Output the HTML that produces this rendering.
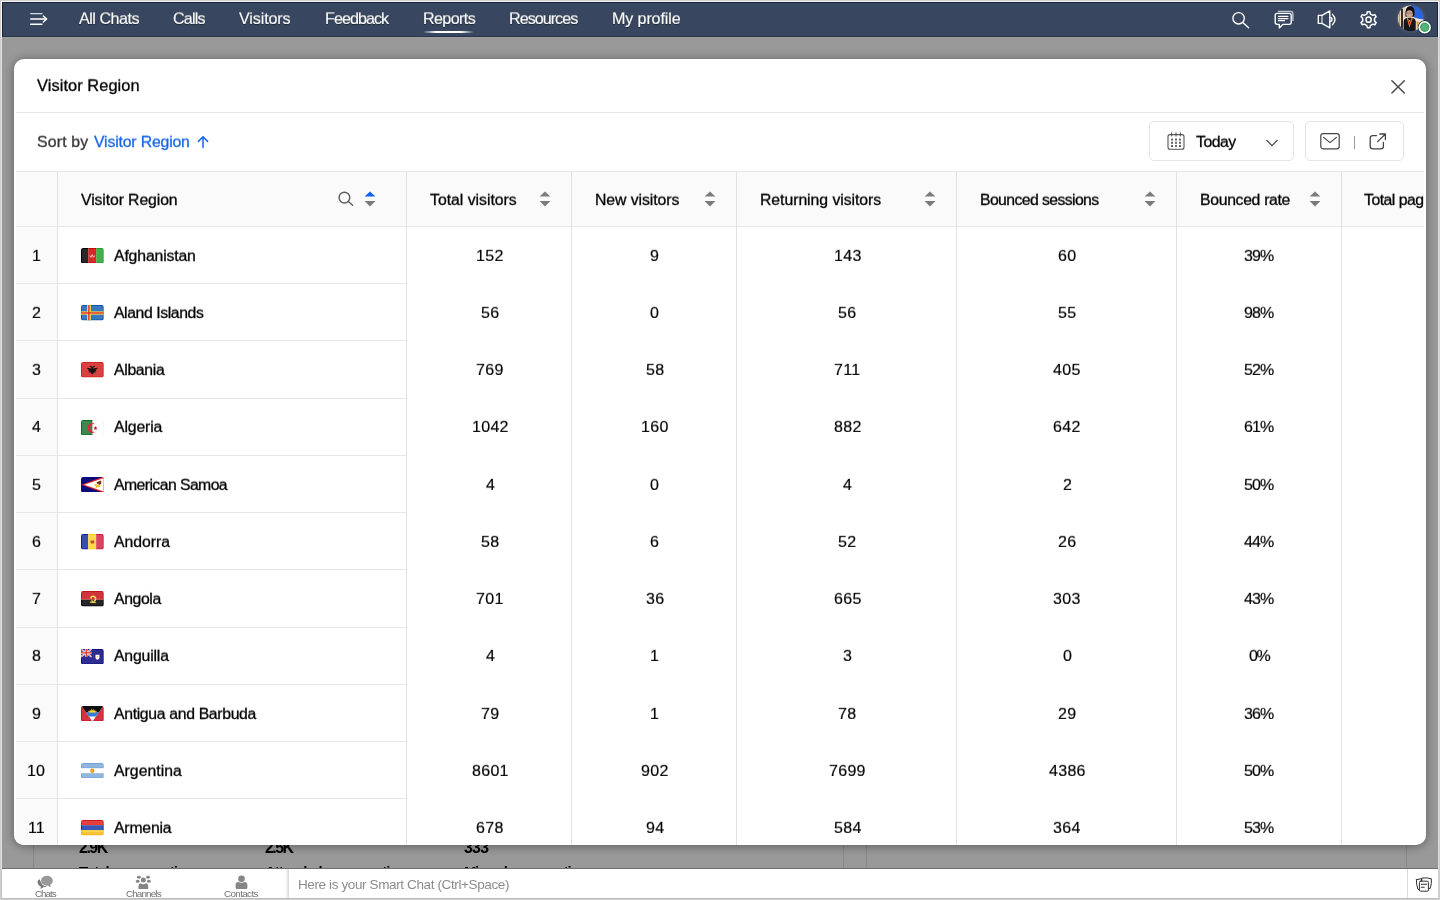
<!DOCTYPE html>
<html lang="en">
<head>
<meta charset="utf-8">
<title>Visitor Region</title>
<style>
*{box-sizing:border-box;margin:0;padding:0}
html,body{width:1440px;height:900px;overflow:hidden}
body{font-family:"Liberation Sans",sans-serif;background:#fff;position:relative;color:#111}
span{position:absolute;white-space:nowrap;will-change:transform}
div,svg{position:absolute}
#frame{left:0;top:0;width:1440px;height:900px;border:1px solid #cfcfcf;z-index:50}
#frame i{position:absolute;display:block}
#nav{left:2px;top:2px;width:1436px;height:35px;background:#38475f;border-top:1px solid #14233d;border-left:1px solid #14233d;border-right:1px solid #14233d;border-bottom:1px solid #26344c;z-index:5;box-shadow:0 1px 0 rgba(255,245,235,.08)}
#nav span{color:#fff;text-shadow:0 1px 1px rgba(0,0,0,.55)}
#page{left:2px;top:37px;width:1436px;height:832px;background:#fff;overflow:hidden}
#overlay{left:2px;top:37px;width:1436px;height:832px;background:rgba(0,0,0,.4);z-index:3}
#bbar{left:2px;top:868px;width:1436px;height:30px;background:#fff;z-index:6;overflow:hidden}
#mshadow{left:14px;top:59px;width:1412px;height:786px;border-radius:10px;box-shadow:0 1px 11px rgba(0,0,0,.42);z-index:9}
#modal{left:14px;top:59px;width:1412px;height:786px;background:#fff;border-radius:10px;overflow:hidden;z-index:10}
.hl{height:1px;background:#e7e7e7}
.vl{width:1px;background:#e2e2e2}
.btn{border:1px solid #e4e4e4;border-radius:5px;background:#fff}
</style>
</head>
<body>
<div id="page"><div style="left:31px;top:60px;width:811px;height:772px;border-left:1px solid #e2e2e2;border-right:1px solid #e2e2e2"></div><div style="left:864px;top:60px;width:541px;height:772px;border-left:1px solid #e2e2e2;border-right:1px solid #e2e2e2"></div><span style="left:76.80px;top:801.30px;font-size:15.8px;line-height:20px;letter-spacing:-1.400px;color:#000;font-weight:bold;">2.9K</span><span style="left:263.00px;top:801.30px;font-size:15.8px;line-height:20px;letter-spacing:-1.467px;color:#000;font-weight:bold;">2.5K</span><span style="left:462.00px;top:801.30px;font-size:15.8px;line-height:20px;letter-spacing:-0.675px;color:#000;font-weight:bold;">333</span><span style="left:76.50px;top:825.10px;font-size:15px;line-height:20px;letter-spacing:-1.006px;color:#000;font-weight:bold;">Total conversations</span><span style="left:263.00px;top:825.10px;font-size:15px;line-height:20px;letter-spacing:-1.040px;color:#000;font-weight:bold;">Attended conversations</span><span style="left:462.00px;top:825.10px;font-size:15px;line-height:20px;letter-spacing:-1.405px;color:#000;font-weight:bold;">Missed conversations</span></div><div id="overlay"></div><div id="nav"></div><div style="left:0;top:0;width:1440px;height:40px;z-index:6" id="navitems"><span style="left:79.00px;top:8.30px;font-size:16.1px;line-height:20px;letter-spacing:-0.475px;color:#fff;transform:scaleY(0.97);transform-origin:0 16.00px;-webkit-text-stroke:0.15px #fff;text-shadow:0 1px 1px rgba(0,0,0,.5);">All Chats</span><span style="left:173.00px;top:8.30px;font-size:16.1px;line-height:20px;letter-spacing:-0.800px;color:#fff;transform:scaleY(0.97);transform-origin:0 16.00px;-webkit-text-stroke:0.15px #fff;text-shadow:0 1px 1px rgba(0,0,0,.5);">Calls</span><span style="left:239.00px;top:8.30px;font-size:16.1px;line-height:20px;letter-spacing:-0.129px;color:#fff;transform:scaleY(0.97);transform-origin:0 16.00px;-webkit-text-stroke:0.15px #fff;text-shadow:0 1px 1px rgba(0,0,0,.5);">Visitors</span><span style="left:324.50px;top:8.30px;font-size:16.1px;line-height:20px;letter-spacing:-0.950px;color:#fff;transform:scaleY(0.97);transform-origin:0 16.00px;-webkit-text-stroke:0.15px #fff;text-shadow:0 1px 1px rgba(0,0,0,.5);">Feedback</span><span style="left:422.50px;top:8.30px;font-size:16.1px;line-height:20px;letter-spacing:-0.608px;color:#fff;transform:scaleY(0.97);transform-origin:0 16.00px;-webkit-text-stroke:0.15px #fff;text-shadow:0 1px 1px rgba(0,0,0,.5);">Reports</span><span style="left:509.00px;top:8.30px;font-size:16.1px;line-height:20px;letter-spacing:-0.969px;color:#fff;transform:scaleY(0.97);transform-origin:0 16.00px;-webkit-text-stroke:0.15px #fff;text-shadow:0 1px 1px rgba(0,0,0,.5);">Resources</span><span style="left:611.50px;top:8.30px;font-size:16.1px;line-height:20px;letter-spacing:-0.122px;color:#fff;transform:scaleY(0.97);transform-origin:0 16.00px;-webkit-text-stroke:0.15px #fff;text-shadow:0 1px 1px rgba(0,0,0,.5);">My profile</span><div style="left:423px;top:31px;width:51px;height:2px;border-radius:2px;background:linear-gradient(90deg,rgba(255,255,255,0),#fff 25%,#fff 75%,rgba(255,255,255,0))"></div><svg width="24" height="16" viewBox="0 0 24 16" style="left:27.8px;top:10.5px" fill="none" stroke="#fff" stroke-width="1.4" stroke-linecap="round" stroke-linejoin="round"><path d="M2.7 2.6 H14" opacity=".8"/><path d="M2.7 8 H18.4"/><path d="M2.7 13.3 H14"/><path d="M15.3 4.9 L18.6 8 L15.3 11.1"/></svg><svg width="220" height="40" viewBox="1220 0 220 40" style="left:1220px;top:0" fill="none" stroke="#fff" stroke-width="1.35" stroke-linecap="round" stroke-linejoin="round"><circle cx="1238.6" cy="18.3" r="5.7"/><path d="M1242.8 22.4 L1248.6 27.7"/><path d="M1278.4 11.3 H1290.6 Q1292.9 11.3 1292.9 13.6 V20.6" opacity=".7"/><path d="M1277.2 13.3 H1289.2 Q1291.2 13.3 1291.2 15.3 V22.3 Q1291.2 24.3 1289.2 24.3 H1283 L1279.3 27.9 V24.3 H1277.2 Q1275.2 24.3 1275.2 22.3 V15.3 Q1275.2 13.3 1277.2 13.3 Z"/><path d="M1278.4 16.3 H1288 M1278.4 18.6 H1288 M1278.4 20.7 H1284.6" stroke-width="1.2"/><path d="M1318.3 15.4 H1322 L1329.8 10.9 V27.9 L1322 23.4 H1318.3 Z"/><path d="M1322 15.4 V23.4" opacity=".75"/><path d="M1329.9 17.3 A2.1 2.1 0 0 1 1329.9 21.5"/><path d="M1332.4 14.2 Q1337.4 19.5 1332.4 24.8"/><path d="M1370.30 25.56 L1369.87 27.70 L1367.33 27.70 L1366.90 25.56 L1364.38 24.10 L1362.31 24.80 L1361.04 22.60 L1362.68 21.16 L1362.68 18.24 L1361.04 16.80 L1362.31 14.60 L1364.38 15.30 L1366.90 13.84 L1367.33 11.70 L1369.87 11.70 L1370.30 13.84 L1372.82 15.30 L1374.89 14.60 L1376.16 16.80 L1374.52 18.24 L1374.52 21.16 L1376.16 22.60 L1374.89 24.80 L1372.82 24.10 Z" stroke-width="1.5" stroke-linejoin="round"/><circle cx="1368.6" cy="19.7" r="2.6" stroke-width="1.5"/></svg><svg width="44" height="38" viewBox="1394 0 44 38" style="left:1394px;top:0"><defs><clipPath id="av"><circle cx="1410.7" cy="18.4" r="12.8"/></clipPath><filter id="bl" x="-20%" y="-20%" width="140%" height="140%"><feGaussianBlur stdDeviation=".55"/></filter><radialGradient id="gl"><stop offset="0.8" stop-color="#8fa0b8" stop-opacity=".2"/><stop offset="1" stop-color="#8fa0b8" stop-opacity="0"/></radialGradient></defs><circle cx="1410.7" cy="18.4" r="15.5" fill="url(#gl)"/><g clip-path="url(#av)"><g filter="url(#bl)"><rect x="1396" y="4" width="30" height="30" fill="#efe9dc"/><rect x="1398.6" y="12" width="1.6" height="20" fill="#d59a48"/><rect x="1401" y="9" width="2" height="24" fill="#3a2c24"/><rect x="1403.6" y="6" width="1.4" height="12" fill="#d9c9a8"/><path d="M1410.4 4 H1426 V19.4 L1419.5 19 L1414 17.6 Z" fill="#2a63de"/><path d="M1405.4 16.4 Q1404.6 6.4 1410 6 Q1415 6.2 1414.6 14.6 L1413.4 17 H1406.4 Z" fill="#16100f"/><ellipse cx="1409.5" cy="14.3" rx="3.3" ry="4.1" fill="#c9a391"/><rect x="1406.6" y="12.6" width="5.8" height="1" fill="#7b5a4e" opacity=".6"/><path d="M1403.6 34 V22 Q1403.8 18.6 1406.6 18 L1412.8 18 Q1415.6 18.6 1415.8 22 V34 Z" fill="#17151a"/><path d="M1416 20.4 Q1419.4 21 1420.6 24 V34 H1415.8 Z" fill="#ead9a8"/><path d="M1416.2 21 L1418.8 22.6 L1417.6 27 Z" fill="#e79b3a"/><path d="M1406.6 17.8 L1409.5 27.8 L1412.9 17.8 L1411.5 17.8 L1409.5 24.2 L1408 17.8 Z" fill="#f0743a"/><circle cx="1409.5" cy="20.8" r=".8" fill="#e3c44a"/></g></g><circle cx="1424.7" cy="27.3" r="7.1" fill="#1a2943" opacity=".8"/><circle cx="1424.7" cy="27.3" r="6.2" fill="#fff"/><circle cx="1424.7" cy="27.3" r="4.6" fill="#2fa355"/><circle cx="1424.7" cy="27.3" r="3.5" fill="#55b279"/></svg></div><div id="bbar"><div style="left:0;top:0;width:1436px;height:1px;background:#6f6f6f"></div><div style="left:282.5px;top:1px;width:3px;height:29px;background:linear-gradient(90deg,rgba(0,0,0,0),rgba(0,0,0,.10))"></div><div style="left:285.5px;top:1px;width:1px;height:29px;background:#dcdcdc"></div><div class="vl" style="left:1405px;top:1px;height:29px;background:#dadada"></div><span style="left:32.60px;top:18.80px;font-size:9.8px;line-height:14px;letter-spacing:-1.000px;color:#707070;">Chats</span><span style="left:123.80px;top:18.80px;font-size:9.8px;line-height:14px;letter-spacing:-0.829px;color:#707070;">Channels</span><span style="left:222.20px;top:18.80px;font-size:9.8px;line-height:14px;letter-spacing:-0.607px;color:#707070;">Contacts</span><span style="left:296.40px;top:7.10px;font-size:13.5px;line-height:20px;letter-spacing:-0.380px;color:#8c8c8c;">Here is your Smart Chat (Ctrl+Space)</span><svg width="290" height="30" viewBox="2 868 290 30" style="left:0;top:0"><path d="M37.6 881.2 Q37.4 885.6 41.4 886.9 L39.4 888.6 Q42.4 888.4 43.8 886.9 Q46 887 47 886.4 Q41.6 886.6 39.8 879.2 Q37.8 879.8 37.6 881.2 Z" fill="#7a7a7a"/><ellipse cx="46.9" cy="880.7" rx="5.9" ry="5" fill="#999"/><path d="M47.6 885.4 L50.8 887.3 L50 884.4 Z" fill="#8a8a8a"/><g fill="#858585"><circle cx="143.3" cy="879.9" r="2.5"/><path d="M138.5 888.9 V885.8 Q138.5 883.4 140.6 883.3 Q143.3 885 146 883.3 Q148.2 883.4 148.2 885.8 V888.9 Z"/><ellipse cx="138.8" cy="877.3" rx="1.9" ry="1.45"/><ellipse cx="148" cy="877.3" rx="1.9" ry="1.45"/><ellipse cx="137.7" cy="881.3" rx="1.9" ry="1.5"/><ellipse cx="148.9" cy="881.3" rx="1.9" ry="1.5"/></g><g fill="#858585"><circle cx="241.5" cy="878.7" r="3.3"/><path d="M235.6 887.4 V885 Q235.6 882.4 238.2 882.1 Q241.5 883.6 244.8 882.1 Q247.4 882.4 247.4 885 V887.4 Q247.4 888.9 245.9 888.9 H237.1 Q235.6 888.9 235.6 887.4 Z"/></g></svg><svg width="18" height="16" viewBox="0 0 18 16" style="left:1413px;top:8.7px" fill="#fff" stroke="#333" stroke-width="1" stroke-linejoin="round" stroke-linecap="round"><path d="M1.4 2.8 L6.4 1.6 L7 12.8 L3 12.4 Q1 7 1.4 2.8 Z"/><path d="M7.2 1 Q12 .4 16.4 1.8 Q16.8 7 15.2 11.4 L7.4 12 Z"/><rect x="4.4" y="4.2" width="9" height="10" rx="1.2"/><path d="M6.4 7.2 H11.6 M6.4 10.2 H9.2" stroke-width="1.1"/></svg></div><div id="mshadow"></div><div id="modal"><span style="left:22.60px;top:16.10px;font-size:16.4px;line-height:20px;letter-spacing:0.069px;color:#000;transform:scaleY(0.97);transform-origin:0 16.00px;-webkit-text-stroke:0.3px #000;">Visitor Region</span><svg width="16" height="16" viewBox="0 0 16 16" style="left:1376px;top:19.599999999999994px" fill="none" stroke="#4a4a4a" stroke-width="1.45" stroke-linecap="round"><path d="M1.9 1.7 L14.3 14.1 M14.3 1.7 L1.9 14.1"/></svg><div class="hl" style="left:2px;top:53px;width:1408px"></div><span style="left:22.60px;top:72.60px;font-size:15.8px;line-height:20px;letter-spacing:0.192px;color:#333;transform:scaleY(0.94);transform-origin:0 15.50px;-webkit-text-stroke:0.3px #333;">Sort by</span><span style="left:80.40px;top:72.60px;font-size:15.8px;line-height:20px;letter-spacing:-0.165px;color:#1667e6;transform:scaleY(0.94);transform-origin:0 15.50px;-webkit-text-stroke:0.3px #1667e6;">Visitor Region</span><svg width="14" height="14" viewBox="0 0 14 14" style="left:181.6px;top:75.6px" fill="none" stroke="#1667e6" stroke-width="1.5" stroke-linecap="round" stroke-linejoin="round"><path d="M7 12.4 V1.8 M2.4 6.4 L7 1.8 L11.6 6.4"/></svg><div class="btn" style="left:1135px;top:62px;width:145px;height:40px"></div><svg width="20" height="20" viewBox="0 0 20 20" style="left:1151.5px;top:72px" fill="none" stroke="#555" stroke-width="1.1" stroke-linecap="round"><rect x="2" y="3.6" width="16" height="14.6" rx="2"/><path d="M5.6 1.8 V5 M10 1.8 V5 M14.4 1.8 V5"/><g stroke="none" fill="#666"><rect x="5" y="7.6" width="2" height="2"/><rect x="9" y="7.6" width="2" height="2"/><rect x="13" y="7.6" width="2" height="2"/><rect x="5" y="10.8" width="2" height="2"/><rect x="9" y="10.8" width="2" height="2"/><rect x="13" y="10.8" width="2" height="2"/><rect x="5" y="14" width="2" height="2"/><rect x="9" y="14" width="2" height="2"/><rect x="13" y="14" width="2" height="2"/></g></svg><span style="left:1181.60px;top:72.70px;font-size:15.8px;line-height:20px;letter-spacing:-0.512px;color:#000;transform:scaleY(0.94);transform-origin:0 15.50px;-webkit-text-stroke:0.3px #000;">Today</span><svg width="14" height="10" viewBox="0 0 14 10" style="left:1251px;top:79px" fill="none" stroke="#444" stroke-width="1.3" stroke-linecap="round" stroke-linejoin="round"><path d="M1.8 2.4 L7 7.6 L12.2 2.4"/></svg><div class="btn" style="left:1291px;top:62px;width:99px;height:40px"></div><svg width="22" height="18" viewBox="0 0 22 18" style="left:1304.6px;top:72.6px" fill="none" stroke="#444" stroke-width="1.2" stroke-linecap="round" stroke-linejoin="round"><rect x="1.8" y="1.6" width="18.4" height="15.2" rx="2.2"/><path d="M4.6 5.4 L11 10.6 L17.4 5.4"/></svg><div style="left:1340px;top:77px;width:1px;height:13px;background:#999"></div><svg width="20" height="18" viewBox="0 0 20 18" style="left:1354.4px;top:72.6px" fill="none" stroke="#444" stroke-width="1.3" stroke-linecap="round" stroke-linejoin="round"><path d="M8.6 3.6 H4.8 Q2.2 3.6 2.2 6.2 V14.2 Q2.2 16.8 4.8 16.8 H12.8 Q15.4 16.8 15.4 14.2 V10.4"/><path d="M9.6 9.6 L17.2 2.2 M11.8 2 H17.4 V7.6"/></svg><div style="left:2px;top:113px;width:1408px;height:54px;background:#fafafa"></div><div style="left:2px;top:167px;width:42px;height:640px;background:#fafafa"></div><div class="hl" style="left:2px;top:112px;width:1408px"></div><div class="hl" style="left:2px;top:167px;width:1408px"></div><div class="hl" style="left:2px;top:224px;width:390px"></div><div class="hl" style="left:2px;top:281px;width:390px"></div><div class="hl" style="left:2px;top:339px;width:390px"></div><div class="hl" style="left:2px;top:396px;width:390px"></div><div class="hl" style="left:2px;top:453px;width:390px"></div><div class="hl" style="left:2px;top:510px;width:390px"></div><div class="hl" style="left:2px;top:568px;width:390px"></div><div class="hl" style="left:2px;top:625px;width:390px"></div><div class="hl" style="left:2px;top:682px;width:390px"></div><div class="hl" style="left:2px;top:739px;width:390px"></div><div class="vl" style="left:43.4px;top:113px;height:680px"></div><div class="vl" style="left:392px;top:113px;height:680px"></div><div class="vl" style="left:557px;top:113px;height:680px"></div><div class="vl" style="left:722px;top:113px;height:680px"></div><div class="vl" style="left:942px;top:113px;height:680px"></div><div class="vl" style="left:1162px;top:113px;height:680px"></div><div class="vl" style="left:1327px;top:113px;height:680px"></div><span style="left:66.60px;top:130.60px;font-size:15.8px;line-height:20px;letter-spacing:-0.112px;color:#000;transform:scaleY(0.94);transform-origin:0 15.50px;-webkit-text-stroke:0.3px #000;">Visitor Region</span><span style="left:415.60px;top:130.60px;font-size:15.8px;line-height:20px;letter-spacing:-0.015px;color:#000;transform:scaleY(0.94);transform-origin:0 15.50px;-webkit-text-stroke:0.3px #000;">Total visitors</span><span style="left:580.60px;top:130.60px;font-size:15.8px;line-height:20px;letter-spacing:-0.068px;color:#000;transform:scaleY(0.94);transform-origin:0 15.50px;-webkit-text-stroke:0.3px #000;">New visitors</span><span style="left:745.60px;top:130.60px;font-size:15.8px;line-height:20px;letter-spacing:-0.050px;color:#000;transform:scaleY(0.94);transform-origin:0 15.50px;-webkit-text-stroke:0.3px #000;">Returning visitors</span><span style="left:965.60px;top:130.60px;font-size:15.8px;line-height:20px;letter-spacing:-0.603px;color:#000;transform:scaleY(0.94);transform-origin:0 15.50px;-webkit-text-stroke:0.3px #000;">Bounced sessions</span><span style="left:1185.60px;top:130.60px;font-size:15.8px;line-height:20px;letter-spacing:-0.327px;color:#000;transform:scaleY(0.94);transform-origin:0 15.50px;-webkit-text-stroke:0.3px #000;">Bounced rate</span><div style="left:1328px;top:113px;width:82px;height:54px;overflow:hidden"><span style="left:21.80px;top:17.60px;font-size:15.8px;line-height:20px;letter-spacing:-0.519px;color:#000;transform:scaleY(0.94);transform-origin:0 15.50px;-webkit-text-stroke:0.3px #000;">Total page views</span></div><svg width="18" height="18" viewBox="0 0 18 18" style="left:322.6px;top:130.9px" fill="none" stroke="#5c5c5c" stroke-width="1.4" stroke-linecap="round"><circle cx="7.4" cy="7.6" r="5.35"/><path d="M11.3 11.5 L15.6 15.2"/></svg><svg width="12" height="16" viewBox="0 0 12 16" style="left:349.8px;top:132.3px"><path d="M6 .4 L11.4 5.6 H.6 Z" fill="#0f62fa"/><path d="M6 15.5 L11.4 10 H.6 Z" fill="#7a7a7a"/></svg><svg width="12" height="16" viewBox="0 0 12 16" style="left:524.6px;top:132.3px"><path d="M6 .4 L11.4 5.6 H.6 Z" fill="#7d7d7d"/><path d="M6 15.5 L11.4 10 H.6 Z" fill="#7a7a7a"/></svg><svg width="12" height="16" viewBox="0 0 12 16" style="left:689.6px;top:132.3px"><path d="M6 .4 L11.4 5.6 H.6 Z" fill="#7d7d7d"/><path d="M6 15.5 L11.4 10 H.6 Z" fill="#7a7a7a"/></svg><svg width="12" height="16" viewBox="0 0 12 16" style="left:909.6px;top:132.3px"><path d="M6 .4 L11.4 5.6 H.6 Z" fill="#7d7d7d"/><path d="M6 15.5 L11.4 10 H.6 Z" fill="#7a7a7a"/></svg><svg width="12" height="16" viewBox="0 0 12 16" style="left:1129.6px;top:132.3px"><path d="M6 .4 L11.4 5.6 H.6 Z" fill="#7d7d7d"/><path d="M6 15.5 L11.4 10 H.6 Z" fill="#7a7a7a"/></svg><svg width="12" height="16" viewBox="0 0 12 16" style="left:1294.6px;top:132.3px"><path d="M6 .4 L11.4 5.6 H.6 Z" fill="#7d7d7d"/><path d="M6 15.5 L11.4 10 H.6 Z" fill="#7a7a7a"/></svg><span style="left:17.95px;top:186.50px;font-size:16px;line-height:20px;letter-spacing:0.000px;color:#000;transform:scaleY(0.94);transform-origin:0 15.50px;-webkit-text-stroke:0.18px #000;">1</span><svg viewBox="0 0 23 15" preserveAspectRatio="none" width="22.8" height="15.5" style="left:66.8px;top:188.9px"><defs><clipPath id="fc1"><rect x="0" y="0" width="23" height="15" rx="2.2"/></clipPath></defs><g clip-path="url(#fc1)"><rect width="7.3" height="15" fill="#000"/><rect x="7.3" width="8" height="15" fill="#cc0000"/><rect x="15.3" width="7.7" height="15" fill="#22a02a"/><rect x="1" y="1" width="21" height="13" rx="1.2" fill="#fff" opacity="0.16"/><path d="M9 7.6 L10 9 L11.3 6.4 L12.6 9 L13.6 7.6" fill="none" stroke="#fff" stroke-width=".8" stroke-linecap="round" opacity=".9"/></g></svg><span style="left:99.70px;top:186.50px;font-size:15.8px;line-height:20px;letter-spacing:-0.155px;color:#000;transform:scaleY(0.94);transform-origin:0 15.50px;-webkit-text-stroke:0.3px #000;">Afghanistan</span><span style="left:462.35px;top:186.50px;font-size:16px;line-height:20px;letter-spacing:0.300px;color:#000;transform:scaleY(0.94);transform-origin:0 15.50px;-webkit-text-stroke:0.18px #000;">152</span><span style="left:636.35px;top:186.50px;font-size:16px;line-height:20px;letter-spacing:0.000px;color:#000;transform:scaleY(0.94);transform-origin:0 15.50px;-webkit-text-stroke:0.18px #000;">9</span><span style="left:819.55px;top:186.50px;font-size:16px;line-height:20px;letter-spacing:0.300px;color:#000;transform:scaleY(0.94);transform-origin:0 15.50px;-webkit-text-stroke:0.18px #000;">143</span><span style="left:1043.95px;top:186.50px;font-size:16px;line-height:20px;letter-spacing:0.300px;color:#000;transform:scaleY(0.94);transform-origin:0 15.50px;-webkit-text-stroke:0.18px #000;">60</span><span style="left:1230.40px;top:186.50px;font-size:16px;line-height:20px;letter-spacing:-0.900px;color:#000;transform:scaleY(0.94);transform-origin:0 15.50px;-webkit-text-stroke:0.18px #000;">39%</span><span style="left:17.95px;top:243.75px;font-size:16px;line-height:20px;letter-spacing:0.000px;color:#000;transform:scaleY(0.94);transform-origin:0 15.50px;-webkit-text-stroke:0.18px #000;">2</span><svg viewBox="0 0 23 15" preserveAspectRatio="none" width="22.8" height="15.5" style="left:66.8px;top:246.1px"><defs><clipPath id="fc2"><rect x="0" y="0" width="23" height="15" rx="2.2"/></clipPath></defs><g clip-path="url(#fc2)"><rect width="23" height="15" fill="#0b56b3"/><rect x="1" y="1" width="21" height="13" rx="1.2" fill="#fff" opacity="0.2"/><rect x="6.1" width="3.8" height="15" fill="#ffe03a"/><rect y="6.2" width="23" height="3.1" fill="#ffe03a"/><rect x="7.3" width="1.3" height="15" fill="#e0252b"/><rect y="7.1" width="23" height="1.25" fill="#e0252b"/></g></svg><span style="left:99.70px;top:243.75px;font-size:15.8px;line-height:20px;letter-spacing:-0.413px;color:#000;transform:scaleY(0.94);transform-origin:0 15.50px;-webkit-text-stroke:0.3px #000;">Aland Islands</span><span style="left:466.95px;top:243.75px;font-size:16px;line-height:20px;letter-spacing:0.300px;color:#000;transform:scaleY(0.94);transform-origin:0 15.50px;-webkit-text-stroke:0.18px #000;">56</span><span style="left:636.35px;top:243.75px;font-size:16px;line-height:20px;letter-spacing:0.000px;color:#000;transform:scaleY(0.94);transform-origin:0 15.50px;-webkit-text-stroke:0.18px #000;">0</span><span style="left:824.15px;top:243.75px;font-size:16px;line-height:20px;letter-spacing:0.300px;color:#000;transform:scaleY(0.94);transform-origin:0 15.50px;-webkit-text-stroke:0.18px #000;">56</span><span style="left:1043.95px;top:243.75px;font-size:16px;line-height:20px;letter-spacing:0.300px;color:#000;transform:scaleY(0.94);transform-origin:0 15.50px;-webkit-text-stroke:0.18px #000;">55</span><span style="left:1230.40px;top:243.75px;font-size:16px;line-height:20px;letter-spacing:-0.900px;color:#000;transform:scaleY(0.94);transform-origin:0 15.50px;-webkit-text-stroke:0.18px #000;">98%</span><span style="left:17.95px;top:301.01px;font-size:16px;line-height:20px;letter-spacing:0.000px;color:#000;transform:scaleY(0.94);transform-origin:0 15.50px;-webkit-text-stroke:0.18px #000;">3</span><svg viewBox="0 0 23 15" preserveAspectRatio="none" width="22.8" height="15.5" style="left:66.8px;top:303.4px"><defs><clipPath id="fc3"><rect x="0" y="0" width="23" height="15" rx="2.2"/></clipPath></defs><g clip-path="url(#fc3)"><rect width="23" height="15" fill="#d42020"/><rect x="1" y="1" width="21" height="13" rx="1.2" fill="#fff" opacity="0.15"/><path d="M11.4 4.6 L9.2 3.6 L8.6 4.5 L10.6 5.4 L10.6 6.2 L6.4 5.6 L6.2 6.6 L8 7.4 L7 8.2 L8.6 8.8 L7.6 10.2 L9.8 9.8 L10.8 11.8 L12 11.8 L13 9.8 L15.2 10.2 L14.2 8.8 L15.8 8.2 L14.8 7.4 L16.6 6.6 L16.4 5.6 L12.2 6.2 L12.2 5.4 L14.2 4.5 L13.6 3.6 Z" fill="#1a1212"/></g></svg><span style="left:99.70px;top:301.01px;font-size:15.8px;line-height:20px;letter-spacing:-0.333px;color:#000;transform:scaleY(0.94);transform-origin:0 15.50px;-webkit-text-stroke:0.3px #000;">Albania</span><span style="left:462.35px;top:301.01px;font-size:16px;line-height:20px;letter-spacing:0.300px;color:#000;transform:scaleY(0.94);transform-origin:0 15.50px;-webkit-text-stroke:0.18px #000;">769</span><span style="left:631.75px;top:301.01px;font-size:16px;line-height:20px;letter-spacing:0.300px;color:#000;transform:scaleY(0.94);transform-origin:0 15.50px;-webkit-text-stroke:0.18px #000;">58</span><span style="left:820.15px;top:301.01px;font-size:16px;line-height:20px;letter-spacing:0.300px;color:#000;transform:scaleY(0.94);transform-origin:0 15.50px;-webkit-text-stroke:0.18px #000;">711</span><span style="left:1039.35px;top:301.01px;font-size:16px;line-height:20px;letter-spacing:0.300px;color:#000;transform:scaleY(0.94);transform-origin:0 15.50px;-webkit-text-stroke:0.18px #000;">405</span><span style="left:1230.40px;top:301.01px;font-size:16px;line-height:20px;letter-spacing:-0.900px;color:#000;transform:scaleY(0.94);transform-origin:0 15.50px;-webkit-text-stroke:0.18px #000;">52%</span><span style="left:17.95px;top:358.26px;font-size:16px;line-height:20px;letter-spacing:0.000px;color:#000;transform:scaleY(0.94);transform-origin:0 15.50px;-webkit-text-stroke:0.18px #000;">4</span><svg viewBox="0 0 23 15" preserveAspectRatio="none" width="22.8" height="15.5" style="left:66.8px;top:360.6px"><defs><clipPath id="fc4"><rect x="0" y="0" width="23" height="15" rx="2.2"/></clipPath></defs><g clip-path="url(#fc4)"><rect width="23" height="15" fill="#fff"/><rect width="12" height="15" fill="#0c6b22"/><rect x="1" y="1" width="11" height="13" fill="#fff" opacity=".2"/><rect x="12" y="0" width="11" height="15" fill="none" stroke="#f1f1f1" stroke-width="1"/><path d="M13.2 3.5 A4.6 4.6 0 1 0 13.2 11.9 A3.7 3.7 0 1 1 13.2 3.5 Z" fill="#f5203f" stroke="#f5203f" stroke-width=".5"/><path d="M14.6 5.8 L15.2 7.2 L16.7 7.3 L15.5 8.2 L16 9.7 L14.6 8.9 L13.3 9.7 L13.7 8.2 L12.6 7.3 L14 7.2 Z" fill="#d5001c"/></g></svg><span style="left:99.70px;top:358.26px;font-size:15.8px;line-height:20px;letter-spacing:-0.133px;color:#000;transform:scaleY(0.94);transform-origin:0 15.50px;-webkit-text-stroke:0.3px #000;">Algeria</span><span style="left:457.75px;top:358.26px;font-size:16px;line-height:20px;letter-spacing:0.300px;color:#000;transform:scaleY(0.94);transform-origin:0 15.50px;-webkit-text-stroke:0.18px #000;">1042</span><span style="left:627.15px;top:358.26px;font-size:16px;line-height:20px;letter-spacing:0.300px;color:#000;transform:scaleY(0.94);transform-origin:0 15.50px;-webkit-text-stroke:0.18px #000;">160</span><span style="left:819.55px;top:358.26px;font-size:16px;line-height:20px;letter-spacing:0.300px;color:#000;transform:scaleY(0.94);transform-origin:0 15.50px;-webkit-text-stroke:0.18px #000;">882</span><span style="left:1039.35px;top:358.26px;font-size:16px;line-height:20px;letter-spacing:0.300px;color:#000;transform:scaleY(0.94);transform-origin:0 15.50px;-webkit-text-stroke:0.18px #000;">642</span><span style="left:1230.40px;top:358.26px;font-size:16px;line-height:20px;letter-spacing:-0.900px;color:#000;transform:scaleY(0.94);transform-origin:0 15.50px;-webkit-text-stroke:0.18px #000;">61%</span><span style="left:17.95px;top:415.52px;font-size:16px;line-height:20px;letter-spacing:0.000px;color:#000;transform:scaleY(0.94);transform-origin:0 15.50px;-webkit-text-stroke:0.18px #000;">5</span><svg viewBox="0 0 23 15" preserveAspectRatio="none" width="22.8" height="15.5" style="left:66.8px;top:417.8px"><defs><clipPath id="fc5"><rect x="0" y="0" width="23" height="15" rx="2.2"/></clipPath></defs><g clip-path="url(#fc5)"><rect width="23" height="15" fill="#0b0b7c"/><path d="M23 -0.4 L0.2 7.5 L23 15.4 Z" fill="#e8261c"/><path d="M23 1 L3.2 7.5 L23 14 Z" fill="#fff"/><path d="M15.6 5.4 L19.6 3.4 L20.4 3.8 L20.4 6.6 L18.6 7.8 L16.4 6.6 Z" fill="#7a3310"/><path d="M13.4 8.2 L15 6.6 L16.4 8 L19.6 8 L19 9.6 L16.6 9.6 L15.6 10.8 L14.6 10.4 L15.6 9 Z" fill="#f1b51c"/></g></svg><span style="left:99.70px;top:415.52px;font-size:15.8px;line-height:20px;letter-spacing:-0.577px;color:#000;transform:scaleY(0.94);transform-origin:0 15.50px;-webkit-text-stroke:0.3px #000;">American Samoa</span><span style="left:471.55px;top:415.52px;font-size:16px;line-height:20px;letter-spacing:0.000px;color:#000;transform:scaleY(0.94);transform-origin:0 15.50px;-webkit-text-stroke:0.18px #000;">4</span><span style="left:636.35px;top:415.52px;font-size:16px;line-height:20px;letter-spacing:0.000px;color:#000;transform:scaleY(0.94);transform-origin:0 15.50px;-webkit-text-stroke:0.18px #000;">0</span><span style="left:828.75px;top:415.52px;font-size:16px;line-height:20px;letter-spacing:0.000px;color:#000;transform:scaleY(0.94);transform-origin:0 15.50px;-webkit-text-stroke:0.18px #000;">4</span><span style="left:1048.55px;top:415.52px;font-size:16px;line-height:20px;letter-spacing:0.000px;color:#000;transform:scaleY(0.94);transform-origin:0 15.50px;-webkit-text-stroke:0.18px #000;">2</span><span style="left:1230.40px;top:415.52px;font-size:16px;line-height:20px;letter-spacing:-0.900px;color:#000;transform:scaleY(0.94);transform-origin:0 15.50px;-webkit-text-stroke:0.18px #000;">50%</span><span style="left:17.95px;top:472.78px;font-size:16px;line-height:20px;letter-spacing:0.000px;color:#000;transform:scaleY(0.94);transform-origin:0 15.50px;-webkit-text-stroke:0.18px #000;">6</span><svg viewBox="0 0 23 15" preserveAspectRatio="none" width="22.8" height="15.5" style="left:66.8px;top:475.0px"><defs><clipPath id="fc6"><rect x="0" y="0" width="23" height="15" rx="2.2"/></clipPath></defs><g clip-path="url(#fc6)"><rect width="7.3" height="15" fill="#0c1f9c"/><rect x="7.3" width="8" height="15" fill="#fdd01e"/><rect x="15.3" width="7.7" height="15" fill="#d3173a"/><rect x="1" y="1" width="21" height="13" rx="1.2" fill="#fff" opacity="0.2"/><path d="M9.6 6.3 H13.4 V8 Q13.4 9.4 11.5 9.4 Q9.6 9.4 9.6 8 Z" fill="#c5512f"/></g></svg><span style="left:99.70px;top:472.78px;font-size:15.8px;line-height:20px;letter-spacing:-0.033px;color:#000;transform:scaleY(0.94);transform-origin:0 15.50px;-webkit-text-stroke:0.3px #000;">Andorra</span><span style="left:466.95px;top:472.78px;font-size:16px;line-height:20px;letter-spacing:0.300px;color:#000;transform:scaleY(0.94);transform-origin:0 15.50px;-webkit-text-stroke:0.18px #000;">58</span><span style="left:636.35px;top:472.78px;font-size:16px;line-height:20px;letter-spacing:0.000px;color:#000;transform:scaleY(0.94);transform-origin:0 15.50px;-webkit-text-stroke:0.18px #000;">6</span><span style="left:824.15px;top:472.78px;font-size:16px;line-height:20px;letter-spacing:0.300px;color:#000;transform:scaleY(0.94);transform-origin:0 15.50px;-webkit-text-stroke:0.18px #000;">52</span><span style="left:1043.95px;top:472.78px;font-size:16px;line-height:20px;letter-spacing:0.300px;color:#000;transform:scaleY(0.94);transform-origin:0 15.50px;-webkit-text-stroke:0.18px #000;">26</span><span style="left:1230.40px;top:472.78px;font-size:16px;line-height:20px;letter-spacing:-0.900px;color:#000;transform:scaleY(0.94);transform-origin:0 15.50px;-webkit-text-stroke:0.18px #000;">44%</span><span style="left:17.95px;top:530.03px;font-size:16px;line-height:20px;letter-spacing:0.000px;color:#000;transform:scaleY(0.94);transform-origin:0 15.50px;-webkit-text-stroke:0.18px #000;">7</span><svg viewBox="0 0 23 15" preserveAspectRatio="none" width="22.8" height="15.5" style="left:66.8px;top:532.3px"><defs><clipPath id="fc7"><rect x="0" y="0" width="23" height="15" rx="2.2"/></clipPath></defs><g clip-path="url(#fc7)"><rect width="23" height="8.3" fill="#c8101a"/><rect y="8.3" width="23" height="6.7" fill="#000"/><rect x="1" y="1" width="21" height="13" rx="1.2" fill="#fff" opacity="0.15"/><rect y="6.9" width="23" height="1.4" fill="#ff4040" opacity=".45"/><path d="M10 6.4 A2.5 2.5 0 1 1 13.6 9.6" fill="none" stroke="#ffe24a" stroke-width="1.5" stroke-linecap="round"/><path d="M9.6 10.7 L14.4 10.9" stroke="#ffe24a" stroke-width="1.2" stroke-linecap="round"/><path d="M10.6 9.2 L12.4 10.4" stroke="#ffe24a" stroke-width="1"/><circle cx="10.6" cy="6.6" r=".9" fill="#ffd23a"/><circle cx="11.9" cy="7.3" r=".75" fill="#d01530"/></g></svg><span style="left:99.70px;top:530.03px;font-size:15.8px;line-height:20px;letter-spacing:-0.400px;color:#000;transform:scaleY(0.94);transform-origin:0 15.50px;-webkit-text-stroke:0.3px #000;">Angola</span><span style="left:462.35px;top:530.03px;font-size:16px;line-height:20px;letter-spacing:0.300px;color:#000;transform:scaleY(0.94);transform-origin:0 15.50px;-webkit-text-stroke:0.18px #000;">701</span><span style="left:631.75px;top:530.03px;font-size:16px;line-height:20px;letter-spacing:0.300px;color:#000;transform:scaleY(0.94);transform-origin:0 15.50px;-webkit-text-stroke:0.18px #000;">36</span><span style="left:819.55px;top:530.03px;font-size:16px;line-height:20px;letter-spacing:0.300px;color:#000;transform:scaleY(0.94);transform-origin:0 15.50px;-webkit-text-stroke:0.18px #000;">665</span><span style="left:1039.35px;top:530.03px;font-size:16px;line-height:20px;letter-spacing:0.300px;color:#000;transform:scaleY(0.94);transform-origin:0 15.50px;-webkit-text-stroke:0.18px #000;">303</span><span style="left:1230.40px;top:530.03px;font-size:16px;line-height:20px;letter-spacing:-0.900px;color:#000;transform:scaleY(0.94);transform-origin:0 15.50px;-webkit-text-stroke:0.18px #000;">43%</span><span style="left:17.95px;top:587.29px;font-size:16px;line-height:20px;letter-spacing:0.000px;color:#000;transform:scaleY(0.94);transform-origin:0 15.50px;-webkit-text-stroke:0.18px #000;">8</span><svg viewBox="0 0 23 15" preserveAspectRatio="none" width="22.8" height="15.5" style="left:66.8px;top:589.5px"><defs><clipPath id="fc8"><rect x="0" y="0" width="23" height="15" rx="2.2"/></clipPath></defs><g clip-path="url(#fc8)"><rect width="23" height="15" fill="#0f0f80"/><rect x="1" y="1" width="21" height="13" rx="1.2" fill="#fff" opacity="0.13"/><rect width="10.6" height="7.6" fill="#1a2a90"/><path d="M0 0 L10.6 7.6 M10.6 0 L0 7.6" stroke="#fff" stroke-width="1.6"/><path d="M0 0 L10.6 7.6 M10.6 0 L0 7.6" stroke="#e6392e" stroke-width=".6"/><path d="M5.3 0 V7.6 M0 3.8 H10.6" stroke="#fff" stroke-width="2.4"/><path d="M5.3 0 V7.6 M0 3.8 H10.6" stroke="#e2231a" stroke-width="1.2"/><path d="M14.6 5.6 H18.6 V8.2 Q18.6 10 16.6 10.4 Q14.6 10 14.6 8.2 Z" fill="#fff"/><ellipse cx="16.6" cy="7.4" rx="1.2" ry=".7" fill="#f8d878"/></g></svg><span style="left:99.70px;top:587.29px;font-size:15.8px;line-height:20px;letter-spacing:-0.179px;color:#000;transform:scaleY(0.94);transform-origin:0 15.50px;-webkit-text-stroke:0.3px #000;">Anguilla</span><span style="left:471.55px;top:587.29px;font-size:16px;line-height:20px;letter-spacing:0.000px;color:#000;transform:scaleY(0.94);transform-origin:0 15.50px;-webkit-text-stroke:0.18px #000;">4</span><span style="left:636.35px;top:587.29px;font-size:16px;line-height:20px;letter-spacing:0.000px;color:#000;transform:scaleY(0.94);transform-origin:0 15.50px;-webkit-text-stroke:0.18px #000;">1</span><span style="left:828.75px;top:587.29px;font-size:16px;line-height:20px;letter-spacing:0.000px;color:#000;transform:scaleY(0.94);transform-origin:0 15.50px;-webkit-text-stroke:0.18px #000;">3</span><span style="left:1048.55px;top:587.29px;font-size:16px;line-height:20px;letter-spacing:0.000px;color:#000;transform:scaleY(0.94);transform-origin:0 15.50px;-webkit-text-stroke:0.18px #000;">0</span><span style="left:1234.60px;top:587.29px;font-size:16px;line-height:20px;letter-spacing:-1.350px;color:#000;transform:scaleY(0.94);transform-origin:0 15.50px;-webkit-text-stroke:0.18px #000;">0%</span><span style="left:17.95px;top:644.54px;font-size:16px;line-height:20px;letter-spacing:0.000px;color:#000;transform:scaleY(0.94);transform-origin:0 15.50px;-webkit-text-stroke:0.18px #000;">9</span><svg viewBox="0 0 23 15" preserveAspectRatio="none" width="22.8" height="15.5" style="left:66.8px;top:646.7px"><defs><clipPath id="fc9"><rect x="0" y="0" width="23" height="15" rx="2.2"/></clipPath></defs><g clip-path="url(#fc9)"><rect width="23" height="15" fill="#cf1020"/><rect x="1" y="1" width="21" height="13" rx="1.2" fill="#fff" opacity="0.15"/><path d="M0.6 0 H22.4 L11.5 15 Z" fill="#fff"/><path d="M0.6 0 H22.4 L17.9 6.2 H5.1 Z" fill="#0c1010"/><path d="M5.1 6.2 H17.9 L15 10.2 H8 Z" fill="#2f7fd6"/><path d="M8.4 6.2 L6.6 4.6 L9 5.2 L8.6 3.4 L10.2 4.8 L10.4 2.4 L11.5 4.4 L12.6 2.4 L12.8 4.8 L14.4 3.4 L14 5.2 L16.4 4.6 L14.6 6.2 Z" fill="#ffd23a"/></g></svg><span style="left:99.70px;top:644.54px;font-size:15.8px;line-height:20px;letter-spacing:-0.339px;color:#000;transform:scaleY(0.94);transform-origin:0 15.50px;-webkit-text-stroke:0.3px #000;">Antigua and Barbuda</span><span style="left:466.95px;top:644.54px;font-size:16px;line-height:20px;letter-spacing:0.300px;color:#000;transform:scaleY(0.94);transform-origin:0 15.50px;-webkit-text-stroke:0.18px #000;">79</span><span style="left:636.35px;top:644.54px;font-size:16px;line-height:20px;letter-spacing:0.000px;color:#000;transform:scaleY(0.94);transform-origin:0 15.50px;-webkit-text-stroke:0.18px #000;">1</span><span style="left:824.15px;top:644.54px;font-size:16px;line-height:20px;letter-spacing:0.300px;color:#000;transform:scaleY(0.94);transform-origin:0 15.50px;-webkit-text-stroke:0.18px #000;">78</span><span style="left:1043.95px;top:644.54px;font-size:16px;line-height:20px;letter-spacing:0.300px;color:#000;transform:scaleY(0.94);transform-origin:0 15.50px;-webkit-text-stroke:0.18px #000;">29</span><span style="left:1230.40px;top:644.54px;font-size:16px;line-height:20px;letter-spacing:-0.900px;color:#000;transform:scaleY(0.94);transform-origin:0 15.50px;-webkit-text-stroke:0.18px #000;">36%</span><span style="left:13.45px;top:701.80px;font-size:16px;line-height:20px;letter-spacing:0.100px;color:#000;transform:scaleY(0.94);transform-origin:0 15.50px;-webkit-text-stroke:0.18px #000;">10</span><svg viewBox="0 0 23 15" preserveAspectRatio="none" width="22.8" height="15.5" style="left:66.8px;top:703.9px"><defs><clipPath id="fc10"><rect x="0" y="0" width="23" height="15" rx="2.2"/></clipPath></defs><g clip-path="url(#fc10)"><rect width="23" height="15" fill="#fff"/><rect width="23" height="5" fill="#73a5d8"/><rect y="10" width="23" height="5" fill="#73a5d8"/><rect x="1" y="1" width="21" height="3.4" fill="#fff" opacity=".2"/><rect x="1" y="10.6" width="21" height="3.4" fill="#fff" opacity=".2"/><circle cx="11.4" cy="7.5" r="2.1" fill="#e8901a"/><circle cx="11.4" cy="7.5" r="1.1" fill="#f2b52c"/></g></svg><span style="left:99.70px;top:701.80px;font-size:15.8px;line-height:20px;letter-spacing:0.019px;color:#000;transform:scaleY(0.94);transform-origin:0 15.50px;-webkit-text-stroke:0.3px #000;">Argentina</span><span style="left:457.75px;top:701.80px;font-size:16px;line-height:20px;letter-spacing:0.300px;color:#000;transform:scaleY(0.94);transform-origin:0 15.50px;-webkit-text-stroke:0.18px #000;">8601</span><span style="left:627.15px;top:701.80px;font-size:16px;line-height:20px;letter-spacing:0.300px;color:#000;transform:scaleY(0.94);transform-origin:0 15.50px;-webkit-text-stroke:0.18px #000;">902</span><span style="left:814.95px;top:701.80px;font-size:16px;line-height:20px;letter-spacing:0.300px;color:#000;transform:scaleY(0.94);transform-origin:0 15.50px;-webkit-text-stroke:0.18px #000;">7699</span><span style="left:1034.75px;top:701.80px;font-size:16px;line-height:20px;letter-spacing:0.300px;color:#000;transform:scaleY(0.94);transform-origin:0 15.50px;-webkit-text-stroke:0.18px #000;">4386</span><span style="left:1230.40px;top:701.80px;font-size:16px;line-height:20px;letter-spacing:-0.900px;color:#000;transform:scaleY(0.94);transform-origin:0 15.50px;-webkit-text-stroke:0.18px #000;">50%</span><span style="left:14.05px;top:759.05px;font-size:16px;line-height:20px;letter-spacing:0.100px;color:#000;transform:scaleY(0.94);transform-origin:0 15.50px;-webkit-text-stroke:0.18px #000;">11</span><svg viewBox="0 0 23 15" preserveAspectRatio="none" width="22.8" height="15.5" style="left:66.8px;top:761.2px"><defs><clipPath id="fc11"><rect x="0" y="0" width="23" height="15" rx="2.2"/></clipPath></defs><g clip-path="url(#fc11)"><rect width="23" height="5" fill="#d81414"/><rect y="5" width="23" height="5" fill="#0a2ea0"/><rect y="10" width="23" height="5" fill="#f6b40e"/><rect x="1" y="1" width="21" height="13" rx="1.2" fill="#fff" opacity="0.2"/><rect y="3.6" width="23" height="1.2" fill="#f23a2a" opacity=".8"/><rect y="10.2" width="23" height="1.2" fill="#ffe040" opacity=".9"/></g></svg><span style="left:99.70px;top:759.05px;font-size:15.8px;line-height:20px;letter-spacing:-0.208px;color:#000;transform:scaleY(0.94);transform-origin:0 15.50px;-webkit-text-stroke:0.3px #000;">Armenia</span><span style="left:462.35px;top:759.05px;font-size:16px;line-height:20px;letter-spacing:0.300px;color:#000;transform:scaleY(0.94);transform-origin:0 15.50px;-webkit-text-stroke:0.18px #000;">678</span><span style="left:631.75px;top:759.05px;font-size:16px;line-height:20px;letter-spacing:0.300px;color:#000;transform:scaleY(0.94);transform-origin:0 15.50px;-webkit-text-stroke:0.18px #000;">94</span><span style="left:819.55px;top:759.05px;font-size:16px;line-height:20px;letter-spacing:0.300px;color:#000;transform:scaleY(0.94);transform-origin:0 15.50px;-webkit-text-stroke:0.18px #000;">584</span><span style="left:1039.35px;top:759.05px;font-size:16px;line-height:20px;letter-spacing:0.300px;color:#000;transform:scaleY(0.94);transform-origin:0 15.50px;-webkit-text-stroke:0.18px #000;">364</span><span style="left:1230.40px;top:759.05px;font-size:16px;line-height:20px;letter-spacing:-0.900px;color:#000;transform:scaleY(0.94);transform-origin:0 15.50px;-webkit-text-stroke:0.18px #000;">53%</span></div><div id="frame"><i style="left:0;top:0;width:1438px;height:1px;background:#f9f6f2"></i><i style="left:0;top:0;width:1px;height:36px;background:#f9f6f2"></i><i style="left:1437px;top:0;width:1px;height:36px;background:#f4f2ee"></i><i style="left:0;top:36px;width:1px;height:832px;background:#e0e0e0"></i><i style="left:1437px;top:36px;width:1px;height:832px;background:#dedede"></i><i style="left:0;top:868px;width:1px;height:30px;background:#c2c2c2"></i><i style="left:1437px;top:868px;width:1px;height:30px;background:#cfcfcf"></i><i style="left:0;top:897px;width:1438px;height:1px;background:#bdbdbd"></i></div></body></html>
